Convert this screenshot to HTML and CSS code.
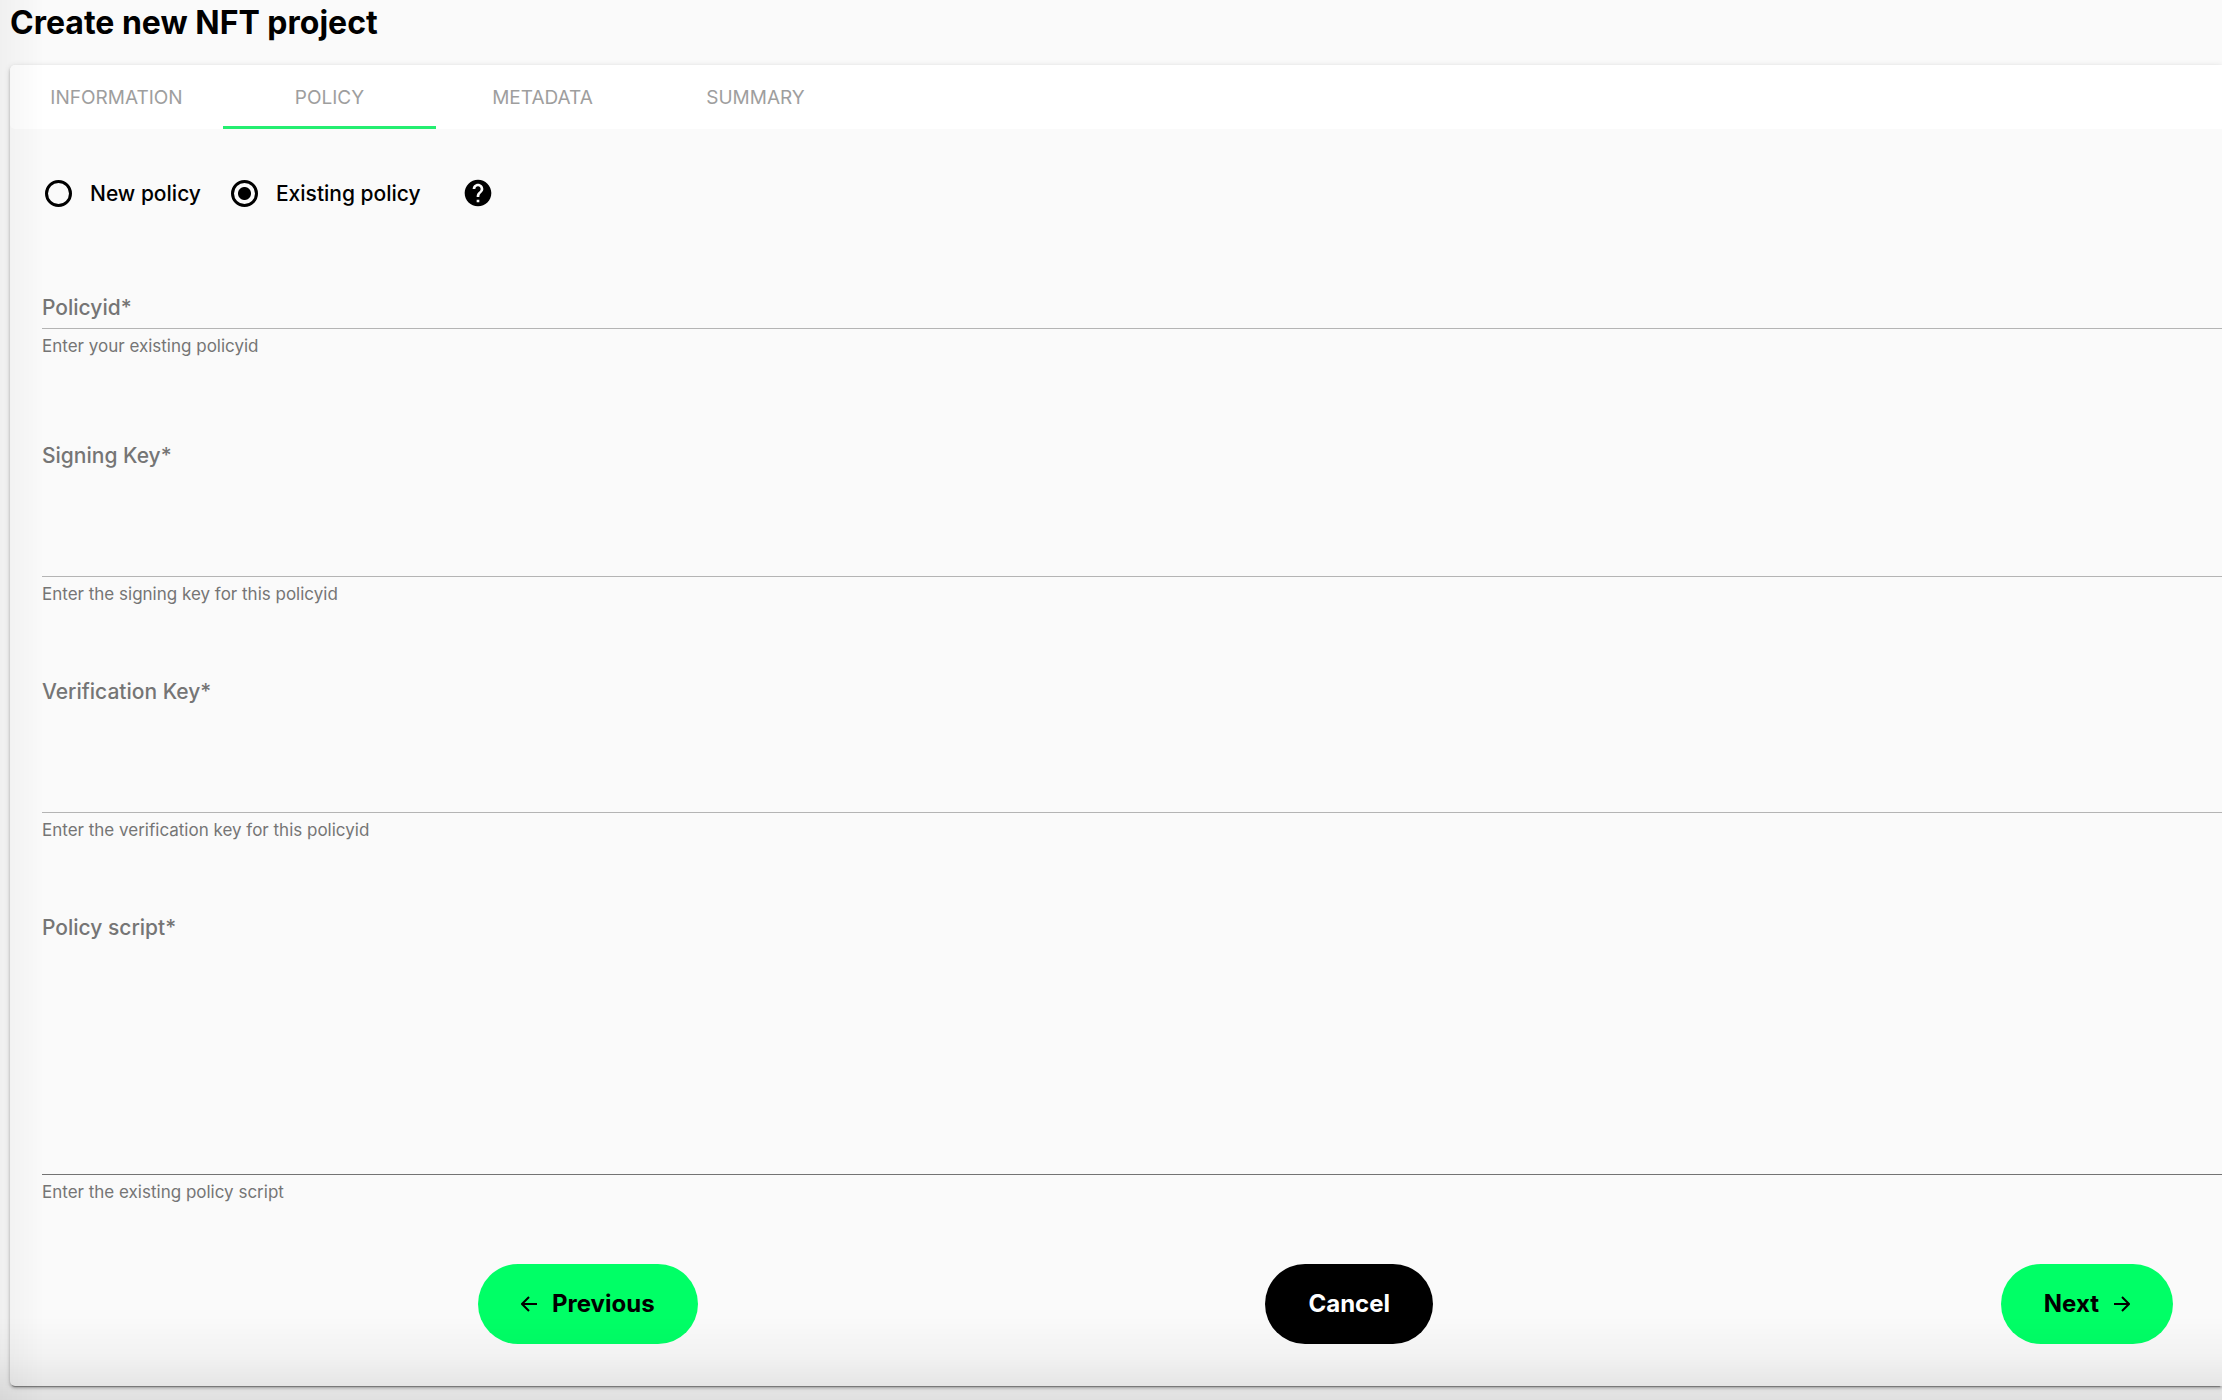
FILE: index.html
```html
<!DOCTYPE html>
<html lang="en">
<head>
  <meta charset="utf-8">
  <meta name="viewport" content="width=device-width, initial-scale=1">
  <title>Create new NFT project</title>
  <link rel="stylesheet" href="styles.css">
</head>
<body>
  <main class="page">
    <h1 class="page-title">Create new NFT project</h1>
    <section class="panel">
      <nav class="tabs">
        <button type="button" class="tab">INFORMATION</button>
        <button type="button" class="tab tab-active">POLICY</button>
        <button type="button" class="tab">METADATA</button>
        <button type="button" class="tab">SUMMARY</button>
      </nav>
      <form class="form">
        <div class="policy-choice">
          <input class="radio" type="radio" name="policy" id="policy-new">
          <label class="radio-label" for="policy-new">New policy</label>
          <input class="radio" type="radio" name="policy" id="policy-existing" checked>
          <label class="radio-label" for="policy-existing">Existing policy</label>
          <button type="button" class="help" aria-label="Help">
            <svg class="help-icon" viewBox="0 0 24 24"><path d="M12 2C6.48 2 2 6.48 2 12s4.480 10 10 10 10-4.480 10-10S17.520 2 12 2zm1 17h-2v-2h2v2zm2.070-7.750l-.9.920C13.450 12.900 13 13.500 13 15h-2v-.5c0-1.100.450-2.100 1.170-2.830l1.240-1.260c.370-.360.590-.860.590-1.410 0-1.100-.9-2-2-2s-2 .9-2 2H8c0-2.210 1.790-4 4-4s4 1.790 4 4c0 .880-.360 1.680-.930 2.250z"/></svg>
          </button>
        </div>

        <div class="field field-single">
          <div class="control">
            <label class="field-label" for="policyid">Policyid*</label>
            <input class="field-input" type="text" id="policyid">
          </div>
          <p class="hint">Enter your existing policyid</p>
        </div>
        <div class="field field-multi">
          <div class="control">
            <label class="field-label" for="signing-key">Signing Key*</label>
            <textarea class="field-input" id="signing-key"></textarea>
          </div>
          <p class="hint">Enter the signing key for this policyid</p>
        </div>
        <div class="field field-multi">
          <div class="control">
            <label class="field-label" for="verification-key">Verification Key*</label>
            <textarea class="field-input" id="verification-key"></textarea>
          </div>
          <p class="hint">Enter the verification key for this policyid</p>
        </div>
        <div class="field field-script">
          <div class="control">
            <label class="field-label" for="policy-script">Policy script*</label>
            <textarea class="field-input" id="policy-script"></textarea>
          </div>
          <p class="hint">Enter the existing policy script</p>
        </div>

        <div class="actions">
          <button type="button" class="action action-primary">
            <svg class="arrow" viewBox="0 0 16 16"><path d="M16 8H1M8 1L1 8l7 7"/></svg>
            Previous
          </button>
          <button type="button" class="action action-dark">Cancel</button>
          <button type="button" class="action action-primary">
            Next
            <svg class="arrow" viewBox="0 0 16 16"><path d="M0 8h15M8 1l7 7-7 7"/></svg>
          </button>
        </div>
      </form>
    </section>
  </main>
</body>
</html>
```
FILE: styles.css
```css
* {
  box-sizing: border-box;
}

body {
  margin: 0;
  min-height: 100vh;
  background: #fafafa;
  color: #000;
  font-family: Inter, "Liberation Sans", sans-serif;
  font-size: 21px;
  line-height: 28px;
}

button,
input,
textarea {
  font: inherit;
  color: inherit;
}

/* Soft shade along the left and bottom window edges */
body::after {
  content: "";
  position: fixed;
  inset: 0;
  pointer-events: none;
  background:
    linear-gradient(to right, rgba(0, 0, 0, 0.04), transparent 44px),
    linear-gradient(to top, rgba(0, 0, 0, 0.1), rgba(0, 0, 0, 0.03) 44px, transparent 84px);
}

.page {
  padding: 0 0 14px 10px;
}

.page-title {
  margin: 0;
  padding: 3px 0 22px;
  font-size: 32px;
  font-weight: 700;
  line-height: 40px;
}

.panel {
  border-radius: 5px 0 0 5px;
  background: #fafafa;
  box-shadow: 0 3px 1px -2px rgba(0, 0, 0, 0.3), 0 2px 3px rgba(0, 0, 0, 0.25), 0 1px 6px rgba(0, 0, 0, 0.12);
}

.tabs {
  display: flex;
  height: 64px;
  border-radius: 5px 0 0 5px;
  background: #fff;
}

.tab {
  width: 213px;
  padding: 5px 0 0;
  border: 0;
  border-bottom: 3px solid transparent;
  background: none;
  color: #9e9e9e;
  font-size: 19px;
}

.tab-active {
  border-bottom-color: #24ee70;
}

.form {
  padding: 48px 0 42px 32px;
}

.policy-choice {
  display: flex;
  align-items: center;
  height: 32px;
  margin-bottom: 81px;
  font-weight: 500;
}

.radio {
  appearance: none;
  width: 27px;
  height: 27px;
  margin: 0 18px 0 3px;
  border: 3px solid #000;
  border-radius: 50%;
}

.radio:checked {
  background: radial-gradient(circle, #000 6px, transparent 7px);
}

.radio-label {
  padding-top: 1px;
  margin-right: 27px;
}

.help {
  display: flex;
  margin-left: 14px;
  padding: 0;
  border: 0;
  background: none;
}

.help-icon {
  width: 32px;
  height: 32px;
}

.control {
  display: grid;
  border-bottom: 1px solid #b4b4b4;
}

.field-label,
.field-input {
  grid-area: 1 / 1;
}

.field-label {
  align-self: start;
  padding-top: 4px;
  color: #757575;
  font-weight: 500;
}

.field-input {
  width: 100%;
  height: 100%;
  padding: 4px 0;
  border: 0;
  outline: 0;
  background: none;
  resize: none;
}

.hint {
  margin: 5px 0 68px;
  color: #757575;
  font-size: 17px;
  line-height: 24px;
}

.field-single .control {
  height: 39px;
}

.field-single .hint {
  margin-bottom: 80px;
}

.field-multi .control {
  height: 139px;
}

.field-script .control {
  height: 265px;
  border-bottom-color: #737373;
}

.field-script .hint {
  margin-bottom: 60px;
}

.actions {
  display: flex;
  justify-content: space-between;
  padding: 0 49px 0 20%;
}

.action {
  display: flex;
  align-items: center;
  gap: 15px;
  height: 80px;
  padding: 0 43px;
  border: 0;
  border-radius: 40px;
  font-size: 24px;
  font-weight: 700;
}

.action-primary {
  background: #00ff66;
  color: #000;
}

.action-dark {
  background: #000;
  color: #fff;
}

.arrow {
  width: 16px;
  height: 16px;
  fill: none;
  stroke: currentColor;
  stroke-width: 2;
}
```
